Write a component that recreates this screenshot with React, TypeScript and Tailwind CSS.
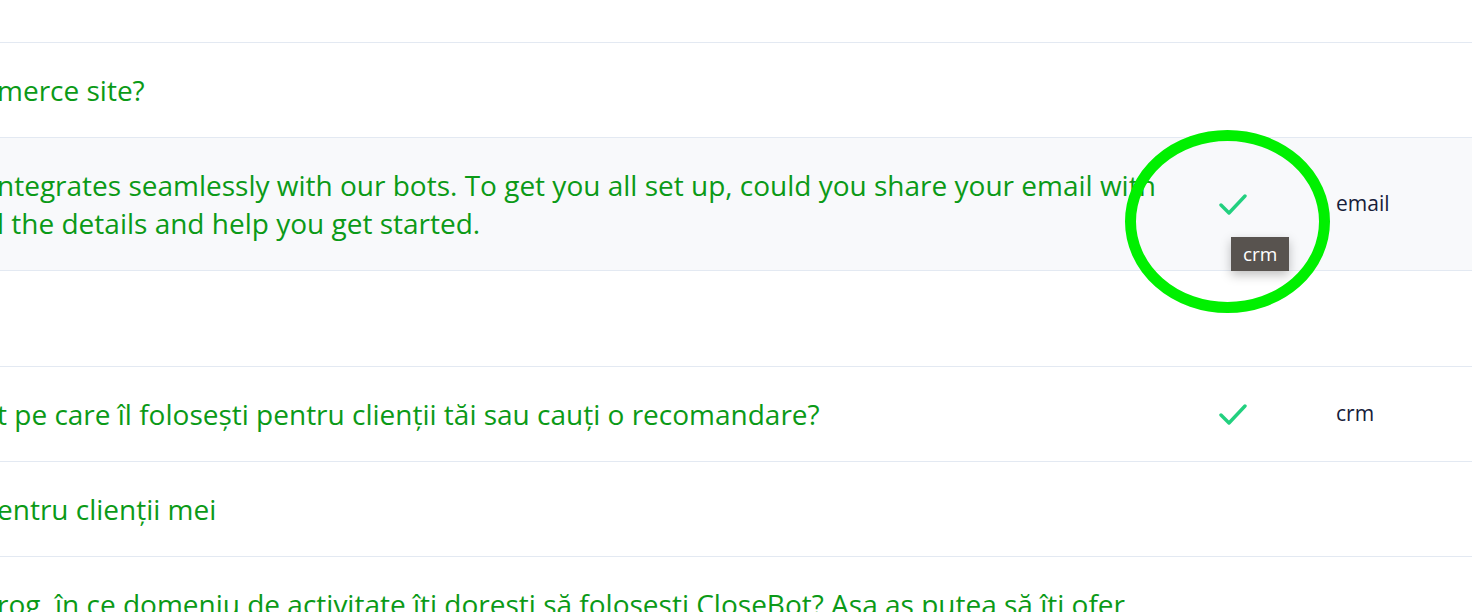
// Conversation table crop: message text, crm check, captured field
const ROWS: { lines: string[]; check?: boolean; field?: string; shaded?: boolean; empty?: boolean }[] = [
  { lines: [], empty: true },
  { lines: ["merce site?"] },
  {
    lines: [
      "ntegrates seamlessly with our bots. To get you all set up, could you share your email with",
      "l the details and help you get started.",
    ],
    check: true,
    field: "email",
    shaded: true,
  },
  { lines: [], empty: true },
  { lines: ["t pe care îl folosești pentru clienții tăi sau cauți o recomandare?"], check: true, field: "crm" },
  { lines: ["entru clienții mei"] },
  { lines: ["rog, în ce domeniu de activitate îți dorești să folosești CloseBot? Așa aș putea să îți ofer"] },
];

function Check() {
  return (
    <svg width="30" height="22" viewBox="0 0 30 22" fill="none">
      <path d="M3 12l8 8L27 3" stroke="#22d07f" strokeWidth="3.4" strokeLinecap="round" strokeLinejoin="round" />
    </svg>
  );
}

export default function App() {
  return (
    <div
      className="relative w-[1472px] h-[612px] overflow-hidden bg-white"
      style={{ fontFamily: '"Open Sans", "Noto Sans", sans-serif' }}
    >
      <div className="flex flex-col -mt-[53px]">
        {ROWS.map((row, i) => (
          <div
            key={i}
            className={`flex items-center border-b border-[#e3e9f2] ${row.shaded ? "bg-[#f8f9fb]" : "bg-white"}`}
          >
            <div className="w-[1170px] shrink-0 py-[28px] -ml-[3px] text-[28px] leading-[38px] text-[#0b9a17] whitespace-nowrap">
              {row.empty ? (
                <div className="h-[39px]" />
              ) : (
                row.lines.map((l, j) => <div key={j}>{l}</div>)
              )}
            </div>
            <div className="relative w-[131px] shrink-0 flex justify-center">
              {row.check && <Check />}
              {row.shaded && (
                <div className="absolute left-[64px] top-[44px] bg-[#58534f] text-white text-[19px] leading-[34px] px-[12px] shadow-[0_4px_10px_rgba(0,0,0,0.25)]">
                  crm
                </div>
              )}
            </div>
            <div className="pl-[38px] text-[21px] text-[#16203a]">{row.field}</div>
          </div>
        ))}
      </div>
      <svg className="absolute left-0 top-0 pointer-events-none" width="1472" height="612">
        <ellipse cx="1227.5" cy="221.5" rx="97" ry="86" fill="none" stroke="#00f000" strokeWidth="11" />
      </svg>
    </div>
  );
}
